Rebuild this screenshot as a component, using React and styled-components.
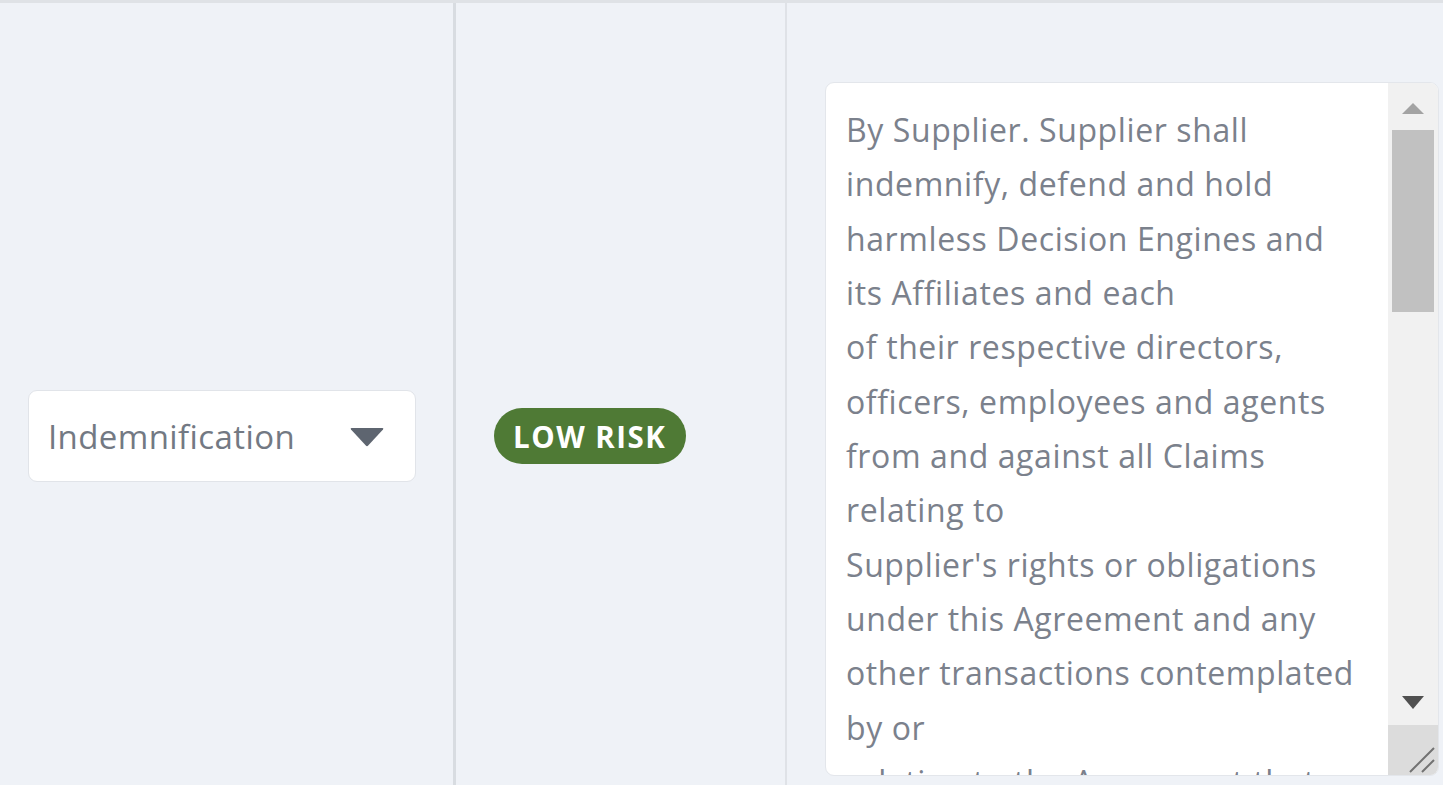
import React from 'react'
import styled, { createGlobalStyle } from 'styled-components'

const clauseLines = [
  'By Supplier. Supplier shall',
  'indemnify, defend and hold',
  'harmless Decision Engines and',
  'its Affiliates and each',
  'of their respective directors,',
  'officers, employees and agents',
  'from and against all Claims',
  'relating to',
  "Supplier's rights or obligations",
  'under this Agreement and any',
  'other transactions contemplated',
  'by or',
  'relating to the Agreement that',
  'are brought by any third party,',
  'including without limitation',
  'Claims arising out of (a) any',
  'breach by Supplier of its',
  'representations, warranties or',
  'covenants under this Agreement;',
  '(b) any negligent act or',
  'omission, or willful misconduct,',
  'of Supplier or its personnel;',
  '(c) any allegation that the',
  'Services or Deliverables infringe',
  'or misappropriate the intellectual',
  'property rights of any third',
  'party; and (d) any violation of',
  'applicable law by Supplier in',
  'the performance of this',
  'Agreement. Decision Engines',
  'shall give Supplier prompt',
  'written notice of any such',
  'Claim and reasonable',
  'cooperation in its defense.',
]

const GlobalStyle = createGlobalStyle`
  html, body {
    margin: 0;
    padding: 0;
    background: #eff2f7;
    overflow: hidden;
  }
  body {
    font-family: "Open Sans", "Liberation Sans", sans-serif;
  }
`

export default function App() {
  return (
    <>
      <GlobalStyle />
      <Row>
        <Cell width="453px" divider="3px solid #d8dce1">
          <Select>
            <SelectLabel>Indemnification</SelectLabel>
            <Caret viewBox="0 0 34 20">
              <path d="M1.5 1 H32.5 Q34 1 33 2.5 L18.2 18.6 Q17 19.8 15.8 18.6 L1 2.5 Q0 1 1.5 1 Z" fill="#5e6570" />
            </Caret>
          </Select>
        </Cell>
        <Cell width="329px" divider="2px solid #dfe2e7">
          <Badge>LOW RISK</Badge>
        </Cell>
        <ClauseCell>
          <ClauseBox>
            <ClauseText readOnly wrap="off" value={clauseLines.join('\n')} />
            <Scrollbar>
              <ScrollButton>
                <svg width="22" height="12" viewBox="0 0 22 12">
                  <polygon points="0,12 11,1 22,12" fill="#a3a3a3" />
                </svg>
              </ScrollButton>
              <Track>
                <Thumb />
              </Track>
              <ScrollButton down>
                <svg width="22" height="14" viewBox="0 0 22 14">
                  <polygon points="0,0 22,0 11,13" fill="#505050" />
                </svg>
              </ScrollButton>
              <Resizer>
                <svg width="50" height="50" viewBox="0 0 50 50">
                  <path d="M22 47 L46 23 M34 47 L46 35" stroke="#727272" strokeWidth="2" />
                </svg>
              </Resizer>
            </Scrollbar>
          </ClauseBox>
        </ClauseCell>
      </Row>
    </>
  )
}

const Row = styled.div`
  display: flex;
  height: 866px;
  border-top: 3px solid #dfe2e6;
`

const Cell = styled.div`
  width: ${p => p.width};
  flex: none;
  border-right: ${p => p.divider};
  display: flex;
  align-items: center;
`

const ClauseCell = styled.div`
  flex: 1;
  padding: 79px 0 0 38px;
`

const Select = styled.div`
  margin-left: 28px;
  width: 388px;
  height: 92px;
  box-sizing: border-box;
  background: #ffffff;
  border: 1px solid #e1e4e9;
  border-radius: 9px;
  display: flex;
  align-items: center;
  justify-content: space-between;
  padding: 0 31px 0 19px;
`

const SelectLabel = styled.span`
  font-size: 33px;
  letter-spacing: 0.4px;
  color: #737983;
`

const Caret = styled.svg`
  width: 34px;
  height: 20px;
  margin-top: 2px;
`

const Badge = styled.span`
  margin-left: 38px;
  height: 56px;
  box-sizing: border-box;
  padding: 0 20px 0 19px;
  border-radius: 28px;
  background: #4f7a35;
  color: #ffffff;
  font-weight: 700;
  font-size: 29.5px;
  letter-spacing: 1.5px;
  display: flex;
  align-items: center;
`

const ClauseBox = styled.div`
  width: 614px;
  height: 694px;
  box-sizing: border-box;
  display: flex;
  background: #ffffff;
  border: 1px solid #e3e6eb;
  border-radius: 9px;
  overflow: hidden;
`

const ClauseText = styled.textarea`
  flex: 1;
  min-width: 0;
  margin: 0;
  padding: 20px 20px 0 20px;
  border: none;
  background: transparent;
  color: #7b818c;
  font-family: "Open Sans", "Liberation Sans", sans-serif;
  font-size: 32px;
  letter-spacing: 0.6px;
  line-height: 54.35px;
  white-space: pre;
  overflow: hidden;
  resize: none;
  outline: none;
`

const Scrollbar = styled.div`
  width: 50px;
  flex: none;
  display: flex;
  flex-direction: column;
  background: #f1f1f1;
`

const ScrollButton = styled.div`
  height: ${p => (p.down ? '44px' : '43px')};
  display: flex;
  justify-content: center;
  align-items: center;
  padding-top: ${p => (p.down ? '0' : '6px')};
  box-sizing: border-box;
  svg {
    display: block;
  }
`

const Track = styled.div`
  flex: 1;
  padding: 4px;
`

const Thumb = styled.div`
  height: 182px;
  background: #c1c1c1;
`

const Resizer = styled.div`
  height: 50px;
  background: #dcdcdc;
  svg {
    display: block;
  }
`
